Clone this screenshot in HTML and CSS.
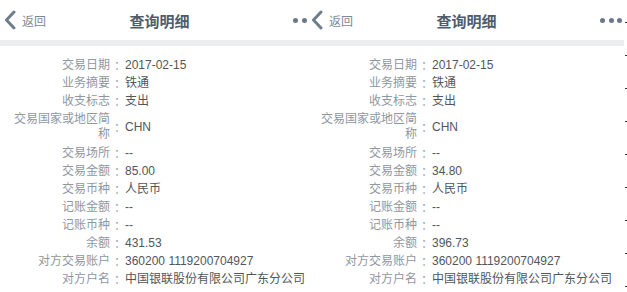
FILE: index.html
```html
<!DOCTYPE html>
<html lang="zh-CN">
<head>
    <meta charset="UTF-8">
    <meta name="viewport" content="width=device-width, initial-scale=1.0">
    <title>查询明细</title>
    <link rel="stylesheet" href="styles.css">
</head>
<body>
    <div class="shots">
        <div class="shot shot-left">
            <div class="screen">
                <div class="topbar">
                    <div class="back">
                        <svg class="chevron" width="12" height="20" viewBox="0 0 12 20"><polyline points="10,2 2.5,10 10,18" fill="none" stroke="#6f7d8b" stroke-width="3" stroke-linecap="round" stroke-linejoin="round"/></svg>
                        <span>返回</span>
                    </div>
                    <div class="title">查询明细</div>
                    <div class="more"><i></i><i></i><i></i></div>
                </div>
                <div class="band"></div>
                <div class="detail">
                    <div class="label">交易日期</div><div class="colon">：</div><div class="value">2017-02-15</div>
                    <div class="label">业务摘要</div><div class="colon">：</div><div class="value">铁通</div>
                    <div class="label">收支标志</div><div class="colon">：</div><div class="value">支出</div>
                    <div class="label two">交易国家或地区简称</div><div class="colon">：</div><div class="value">CHN</div>
                    <div class="label">交易场所</div><div class="colon">：</div><div class="value">--</div>
                    <div class="label">交易金额</div><div class="colon">：</div><div class="value">85.00</div>
                    <div class="label">交易币种</div><div class="colon">：</div><div class="value">人民币</div>
                    <div class="label">记账金额</div><div class="colon">：</div><div class="value">--</div>
                    <div class="label">记账币种</div><div class="colon">：</div><div class="value">--</div>
                    <div class="label">余额</div><div class="colon">：</div><div class="value">431.53</div>
                    <div class="label">对方交易账户</div><div class="colon">：</div><div class="value">360200 1119200704927</div>
                    <div class="label">对方户名</div><div class="colon">：</div><div class="value">中国银联股份有限公司广东分公司</div>
                </div>
            </div>
        </div>

        <div class="shot shot-right">
            <div class="screen">
                <div class="topbar">
                    <div class="back">
                        <svg class="chevron" width="12" height="20" viewBox="0 0 12 20"><polyline points="10,2 2.5,10 10,18" fill="none" stroke="#6f7d8b" stroke-width="3" stroke-linecap="round" stroke-linejoin="round"/></svg>
                        <span>返回</span>
                    </div>
                    <div class="title">查询明细</div>
                    <div class="more"><i></i><i></i><i></i></div>
                </div>
                <div class="band"></div>
                <div class="detail">
                    <div class="label">交易日期</div><div class="colon">：</div><div class="value">2017-02-15</div>
                    <div class="label">业务摘要</div><div class="colon">：</div><div class="value">铁通</div>
                    <div class="label">收支标志</div><div class="colon">：</div><div class="value">支出</div>
                    <div class="label two">交易国家或地区简称</div><div class="colon">：</div><div class="value">CHN</div>
                    <div class="label">交易场所</div><div class="colon">：</div><div class="value">--</div>
                    <div class="label">交易金额</div><div class="colon">：</div><div class="value">34.80</div>
                    <div class="label">交易币种</div><div class="colon">：</div><div class="value">人民币</div>
                    <div class="label">记账金额</div><div class="colon">：</div><div class="value">--</div>
                    <div class="label">记账币种</div><div class="colon">：</div><div class="value">--</div>
                    <div class="label">余额</div><div class="colon">：</div><div class="value">396.73</div>
                    <div class="label">对方交易账户</div><div class="colon">：</div><div class="value">360200 1119200704927</div>
                    <div class="label">对方户名</div><div class="colon">：</div><div class="value">中国银联股份有限公司广东分公司</div>
                </div>
            </div>
        </div>

        <div class="ruler"></div>
    </div>
</body>
</html>
```

FILE: styles.css
```css
body {
    margin: 0;
    background: #fff;
    font-family: "Liberation Sans", "Noto Sans CJK SC", sans-serif;
    overflow: hidden;
}

.shots {
    display: flex;
    height: 292px;
    overflow: hidden;
}

.shot {
    overflow: hidden;
    flex: none;
}

.shot-left {
    width: 307px;
}

.shot-right {
    width: 317px;
}

.screen {
    width: 327px;
    background: #fff;
}

.topbar {
    height: 40px;
    display: grid;
    grid-template-columns: 1fr auto 1fr;
    align-items: center;
    padding: 0 12px 0 4px;
}

.back {
    display: flex;
    align-items: center;
    gap: 6px;
    font-size: 12px;
    color: #7c8894;
}

.chevron {
    display: block;
}

.title {
    font-size: 15px;
    font-weight: bold;
    color: #4f5d6b;
}

.more {
    display: flex;
    justify-content: flex-end;
    gap: 3.5px;
}

.more i {
    width: 5px;
    height: 5px;
    border-radius: 50%;
    background: #6b7885;
}

.band {
    height: 6px;
    background: #eceef0;
}

.detail {
    display: grid;
    grid-template-columns: 110px 15px 1fr;
    grid-auto-rows: minmax(18px, auto);
    align-items: center;
    padding-top: 10px;
    font-size: 12px;
}

.label {
    text-align: right;
    color: #8f979f;
    line-height: 18px;
}

.label.two {
    line-height: 15px;
    padding: 2px 0 2px 14px;
    height: 34px;
    box-sizing: border-box;
}

.colon {
    color: #9aa1a8;
    text-align: center;
    font-family: "Noto Sans CJK SC", sans-serif;
    text-indent: 4px;
    line-height: 18px;
}

.value {
    color: #50565c;
    white-space: nowrap;
    line-height: 18px;
}

.ruler {
    width: 3px;
    flex: none;
    background: repeating-linear-gradient(to bottom, transparent 0, transparent 22px, #333 22px, #333 23px, transparent 23px, transparent 33px);
    background-position: 1px 0;
    background-repeat: repeat-y;
    background-size: 2px 33px;
}
```
